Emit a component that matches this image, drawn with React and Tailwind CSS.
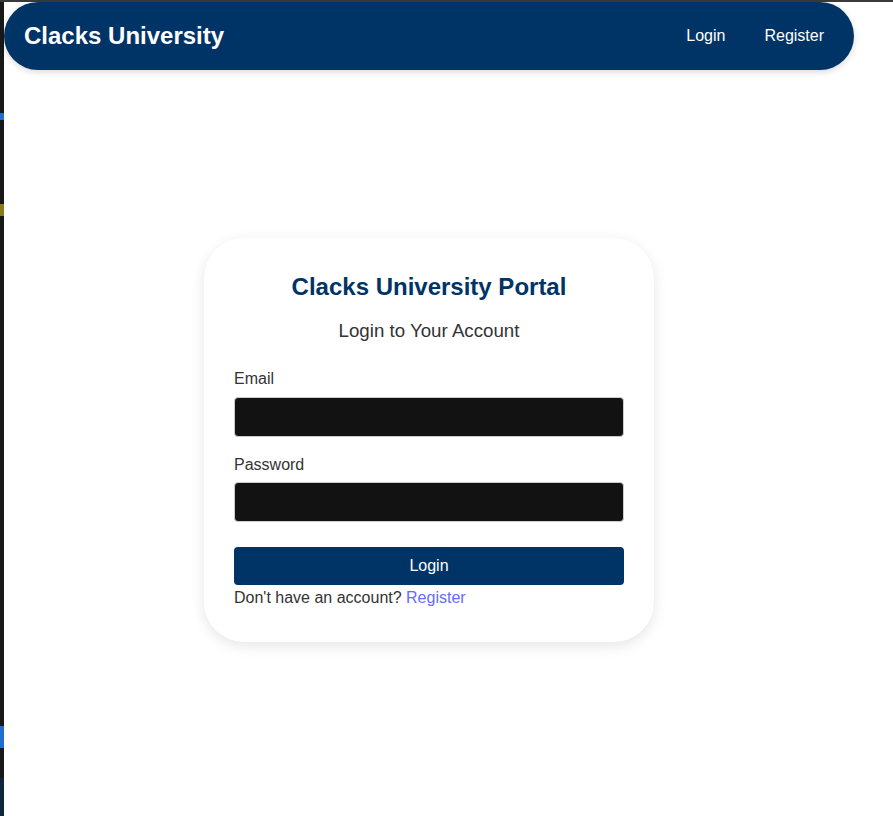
export default function App() {
  return (
    <div className="w-[893px] h-[816px] overflow-hidden flex flex-col bg-white" style={{ fontFamily: '"Liberation Sans", Arial, sans-serif' }}>
      <div className="h-[2px] bg-[#3a3a3a] shrink-0" />
      <div className="flex flex-1">
        <div className="w-[4px] bg-[#181818] flex flex-col shrink-0">
          <div className="h-[111px]" />
          <div className="h-[7px] bg-[#1f6fd1]" />
          <div className="h-[84px]" />
          <div className="h-[12px] bg-[#8a7a1a]" />
          <div className="h-[510px]" />
          <div className="h-[22px] bg-[#1f6fd1]" />
          <div className="h-[30px]" />
          <div className="flex-1 bg-[#10243a]" />
        </div>
        <div className="w-[850px] flex flex-col">
          <nav className="h-[68px] rounded-full bg-[#003366] flex items-center justify-between pl-[20px] pr-[30px] shadow-[0_2px_6px_rgba(0,0,0,0.15)]">
            <div className="text-white text-[24px] font-bold leading-[28px]">Clacks University</div>
            <div className="flex items-center gap-[39px] text-white text-[16px] leading-[20px]">
              <span>Login</span>
              <span>Register</span>
            </div>
          </nav>
          <div className="flex justify-center mt-[168px]">
            <div className="w-[450px] rounded-[40px] bg-white shadow-[0_4px_14px_rgba(0,0,0,0.1)] px-[30px] pt-[35px] pb-[34px] flex flex-col">
              <h2 className="text-center text-[24px] font-bold leading-[28px] text-[#003366]">Clacks University Portal</h2>
              <p className="text-center text-[18.72px] leading-[22px] text-[#333] mt-[19px]">Login to Your Account</p>
              <label className="text-[16px] leading-[20px] text-[#333] mt-[27px]">Email</label>
              <div className="h-[40px] mt-[8px] bg-[#121212] border border-[#ccc] rounded-[4px]" />
              <label className="text-[16px] leading-[20px] text-[#333] mt-[18px]">Password</label>
              <div className="h-[40px] mt-[7px] bg-[#121212] border border-[#ccc] rounded-[4px]" />
              <button className="h-[38px] mt-[25px] bg-[#003366] text-white text-[16px] rounded-[4px]">Login</button>
              <p className="text-[16px] leading-[20px] text-[#333] mt-[3px]">
                Don't have an account? <span className="text-[#646cff]">Register</span>
              </p>
            </div>
          </div>
        </div>
      </div>
    </div>
  );
}
